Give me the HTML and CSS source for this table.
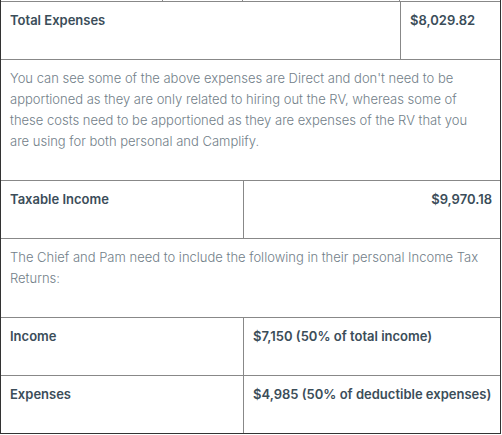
FILE: index.html
```html
<!DOCTYPE html>
<html>
<head>
<meta charset="utf-8">
<link rel="stylesheet" href="styles.css">
</head>
<body>
<div class="doc">
  <div class="stub">
    <span class="s s1"></span><span class="s s2"></span><span class="s s3"></span><span class="s s4"></span>
  </div>
  <div class="row total">
    <div class="cell b">Total Expenses</div>
    <div class="cell b">$8,029.82</div>
  </div>
  <div class="row full">
    <div class="cell p">You can see some of the above expenses are Direct and don't need to be apportioned as they are only related to hiring out the RV, whereas some of these costs need to be apportioned as they are expenses of the RV that you are using for both personal and Camplify.</div>
  </div>
  <div class="row half">
    <div class="cell b">Taxable Income</div>
    <div class="cell b right">$9,970.18</div>
  </div>
  <div class="row full">
    <div class="cell p">The Chief and Pam need to include the following in their personal Income Tax Returns:</div>
  </div>
  <div class="row half">
    <div class="cell b">Income</div>
    <div class="cell b">$7,150 (50% of total income)</div>
  </div>
  <div class="row half last">
    <div class="cell b">Expenses</div>
    <div class="cell b">$4,985 (50% of deductible expenses)</div>
  </div>
</div>
</body>
</html>
```

FILE: styles.css
```css
html, body {
  margin: 0;
  padding: 0;
  background: #fff;
}
.doc {
  width: 499px;
  border-left: 1px solid #333;
  border-right: 1px solid #333;
  border-bottom: 1px solid #333;
  font-family: Inter, "Noto Sans", sans-serif;
}
.stub {
  display: grid;
  grid-template-columns: 162px 80px 157px 100px;
  height: 1px;
}
.s { border-right: 1px solid #888; }
.s4 { border-right: none; }
.row {
  display: grid;
  border-top: 1px solid #888;
}
.total { grid-template-columns: 399px 1fr; }
.half { grid-template-columns: 242px 1fr; }
.full { grid-template-columns: 1fr; }
.row .cell + .cell { border-left: 1px solid #888; }
.cell {
  padding: 8px 8px 28px 9px;
  line-height: 21px;
  height: 21px;
}
.full .cell {
  height: auto;
  padding-right: 12px;
}
.b {
  font-weight: 600;
  font-size: 13px;
  color: #3b4d59;
  white-space: nowrap;
}
.p {
  font-size: 13px;
  font-weight: 300;
  color: #728089;
}
.right { text-align: right; }
```
